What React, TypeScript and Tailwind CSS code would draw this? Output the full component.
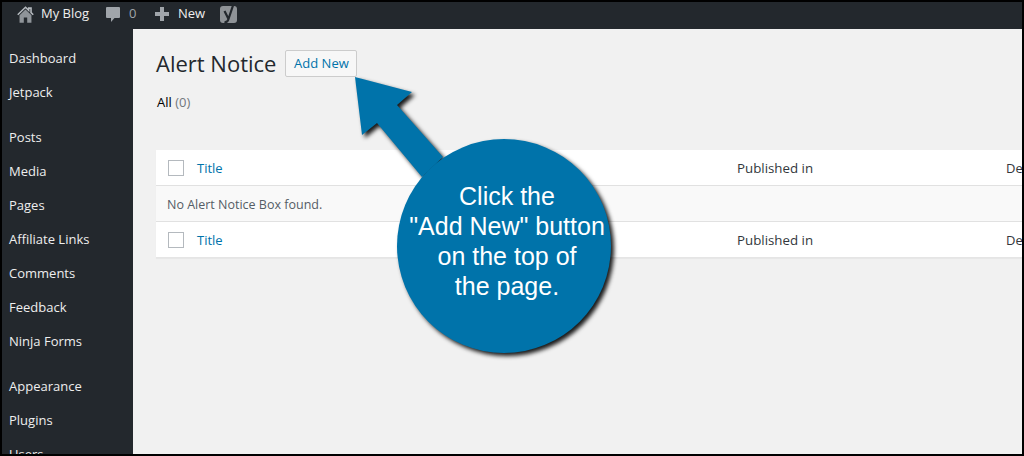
const menuGroups = [
  ["Dashboard", "Jetpack"],
  ["Posts", "Media", "Pages", "Affiliate Links", "Comments", "Feedback", "Ninja Forms"],
  ["Appearance", "Plugins", "Users"],
];

const font = "font-['Open_Sans',sans-serif]";

const TopBar = () => (
  <div className={`flex h-[27px] shrink-0 items-center bg-[#23282d] pb-[3px] pl-[15px] text-[13px] text-[#eeeeee] ${font}`}>
    <svg viewBox="0 0 16 16" className="h-[17px] w-[17px]">
      <path d="M0.7 8.2 8 1.2l3 2.9V2h2.2v4.2l2.1 2" fill="none" stroke="#b4b9be" strokeWidth="1.5" />
      <path d="M8 3.4 13.6 8.7V15.8H9.6V10.8H6.4V15.8H2.4V8.7z" fill="#8f9499" />
    </svg>
    <span className="ml-[7px] w-[65px]">My Blog</span>
    <svg viewBox="0 0 14 15" className="h-[15px] w-[14px] fill-[#a0a5aa]">
      <path d="M1 0h12a1 1 0 0 1 1 1v9a1 1 0 0 1-1 1H8.5L5 15v-4H1a1 1 0 0 1-1-1V1a1 1 0 0 1 1-1z" />
    </svg>
    <span className="ml-[9px] w-[26px] text-[#a0a5aa]">0</span>
    <svg viewBox="0 0 14 14" className="h-[14px] w-[14px] fill-[#a0a5aa]">
      <path d="M5 0h4v5h5v4H9v5H5V9H0V5h5z" />
    </svg>
    <span className="ml-[9px] w-[42px]">New</span>
    <svg viewBox="0 0 18 20" className="h-[20px] w-[18px]">
      <rect x="0" y="2" width="17" height="17" rx="3" fill="#8f9397" />
      <path d="M4.5 7 8.5 15M13.5 0 8.5 15Q7.5 18.5 4.5 18" fill="none" stroke="#23282d" strokeWidth="2.2" />
    </svg>
  </div>
);

const Sidebar = () => (
  <div className={`flex w-[131px] shrink-0 flex-col gap-[11px] bg-[#23282d] pt-[13px] text-[13px] text-[#eeeeee] ${font}`}>
    {menuGroups.map((group) => (
      <div key={group[0]}>
        {group.map((item) => (
          <div key={item} className="flex h-[34px] items-center pl-[7px]">
            {item}
          </div>
        ))}
      </div>
    ))}
  </div>
);

const Checkbox = () => <span className="block h-[16px] w-[16px] border border-[#b4b9be] bg-white" />;

const HeadRow = ({ last }: { last?: boolean }) => (
  <div className={`grid h-[36px] grid-cols-[41px_540px_269px_1fr] items-center border-b bg-white ${last ? "border-[#e5e5e5]" : "border-[#e1e1e1]"}`}>
    <div className="pl-[12px]">
      <Checkbox />
    </div>
    <span className="pt-[2px] text-[#0073aa]">Title</span>
    <span className="pt-[2px] text-[13.3px] text-[#32373c]">Published in</span>
    <span className="whitespace-nowrap pt-[2px] text-[#32373c]">Description</span>
  </div>
);

const Callout = () => (
  <div className="absolute left-0 top-0 h-[456px] w-[1024px]">
    <svg viewBox="0 0 1024 456" className="absolute left-0 top-0 h-full w-full drop-shadow-[3px_3px_2px_rgba(0,0,0,0.9)]">
      <path d="M355 77 412 92 397 105 443 157 422 177 377 123 362 135z" fill="#0073aa" />
      <circle cx="504" cy="246" r="107" fill="#0073aa" />
    </svg>
    <div className="absolute left-[397px] top-[181px] w-[220px] text-center font-['Liberation_Sans',sans-serif] text-[25px] leading-[30px] text-white">
      Click the
      <br />
      "Add New" button
      <br />
      on the top of
      <br />
      the page.
    </div>
  </div>
);

export default function App() {
  return (
    <div className="relative h-[456px] w-[1024px] overflow-hidden">
      <div className="flex h-full w-full flex-col overflow-hidden border-2 border-black bg-[#f1f1f1]">
        <TopBar />
        <div className="flex min-h-0 flex-1">
          <Sidebar />
          <div className={`min-w-0 flex-1 pl-[23px] pt-[21px] text-[13px] ${font}`}>
            <div className="flex items-center">
              <h1 className="text-[22px] leading-[27px] text-[#23282d]">Alert Notice</h1>
              <button className="ml-[9px] flex h-[27px] w-[72px] items-center justify-center rounded-[2px] border border-[#cccccc] bg-[#f7f7f7] font-medium text-[#0073aa]">
                Add New
              </button>
            </div>
            <div className="mt-[15px] h-[20px] pl-[1px] leading-[20px]">
              <span className="text-black">All</span> <span className="text-[#72777c]">(0)</span>
            </div>
            <div className="mt-[38px] shadow-[0_1px_1px_rgba(0,0,0,0.04)]">
              <HeadRow />
              <div className="flex h-[36px] items-center border-b border-[#e1e1e1] bg-[#f9f9f9] pl-[11px] pt-[3px] text-[12.5px] text-[#555d66]">
                No Alert Notice Box found.
              </div>
              <HeadRow last />
            </div>
          </div>
        </div>
      </div>
      <Callout />
    </div>
  );
}
